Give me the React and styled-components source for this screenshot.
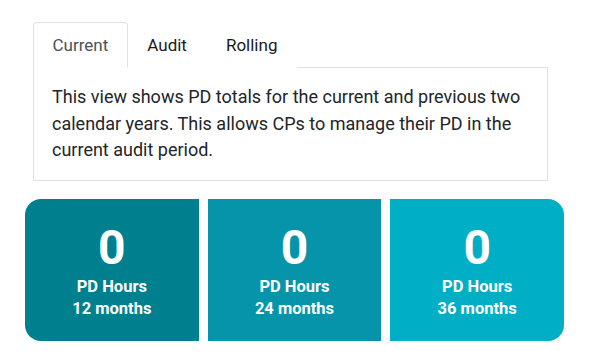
import React, { useState } from 'react';
import styled, { createGlobalStyle } from 'styled-components';

const GlobalStyle = createGlobalStyle`
    body {
        margin: 0;
        background: #fff;
        font-family: Roboto, "Liberation Sans", Arial, sans-serif;
        color: #212529;
    }
`

const Page = styled.div`
    width: 539px;
    padding: 22px 0 0 25px;
`

const TabsSection = styled.div`
    margin-left: 8px;
    width: 515px;
`

const TabBar = styled.div`
    display: flex;
    border-bottom: 1px solid #dee2e6;
`

const Tab = styled.div`
    padding: 11px 18.5px;
    margin-bottom: -1px;
    font-size: 17px;
    line-height: 22px;
    border: 1px solid ${props => props.active ? '#dee2e6' : 'transparent'};
    border-bottom-color: ${props => props.active ? '#fff' : 'transparent'};
    border-top-left-radius: 4px;
    border-top-right-radius: 4px;
    background: #fff;
    color: ${props => props.active ? '#495057' : '#1a1a1a'};
    cursor: pointer;
`

const Panel = styled.div`
    border: 1px solid #dee2e6;
    border-top: none;
    padding: 16px 18px 16px;
    font-size: 18px;
    line-height: 26.5px;
    color: #212529;
`

const Cards = styled.div`
    display: grid;
    grid-template-columns: repeat(3, 1fr);
    gap: 9px;
    margin-top: 18px;
`

const Card = styled.div`
    height: 142px;
    background: ${props => props.color};
    color: #fff;
    display: flex;
    flex-direction: column;
    justify-content: center;
    align-items: center;
    text-align: center;
    border-radius: ${props => props.first ? '16px 0 0 16px' : props.last ? '0 16px 16px 0' : '0'};
`

const Value = styled.div`
    font-size: 48px;
    font-weight: 700;
    line-height: 56px;
`

const Label = styled.div`
    font-size: 16.5px;
    font-weight: 700;
    line-height: 22px;
`

const tabs = ['Current', 'Audit', 'Rolling']

const cards = [
    { months: 12, color: '#00808f' },
    { months: 24, color: '#0594aa' },
    { months: 36, color: '#00aec6' },
]

export default function App() {
    const [active, setActive] = useState('Current');
    return (
        <Page>
            <GlobalStyle/>
            <TabsSection>
                <TabBar>
                    {tabs.map(t => (
                        <Tab key={t} active={t === active} onClick={() => setActive(t)}>
                            {t}
                        </Tab>
                    ))}
                </TabBar>
                <Panel>
                    This view shows PD totals for the current and previous two calendar years. This allows CPs to manage their PD in the current audit period.
                </Panel>
            </TabsSection>
            <Cards>
                {cards.map((c, i) => (
                    <Card key={c.months} color={c.color} first={i === 0} last={i === cards.length - 1}>
                        <Value>0</Value>
                        <Label>PD Hours</Label>
                        <Label>{c.months} months</Label>
                    </Card>
                ))}
            </Cards>
        </Page>
    );
}
